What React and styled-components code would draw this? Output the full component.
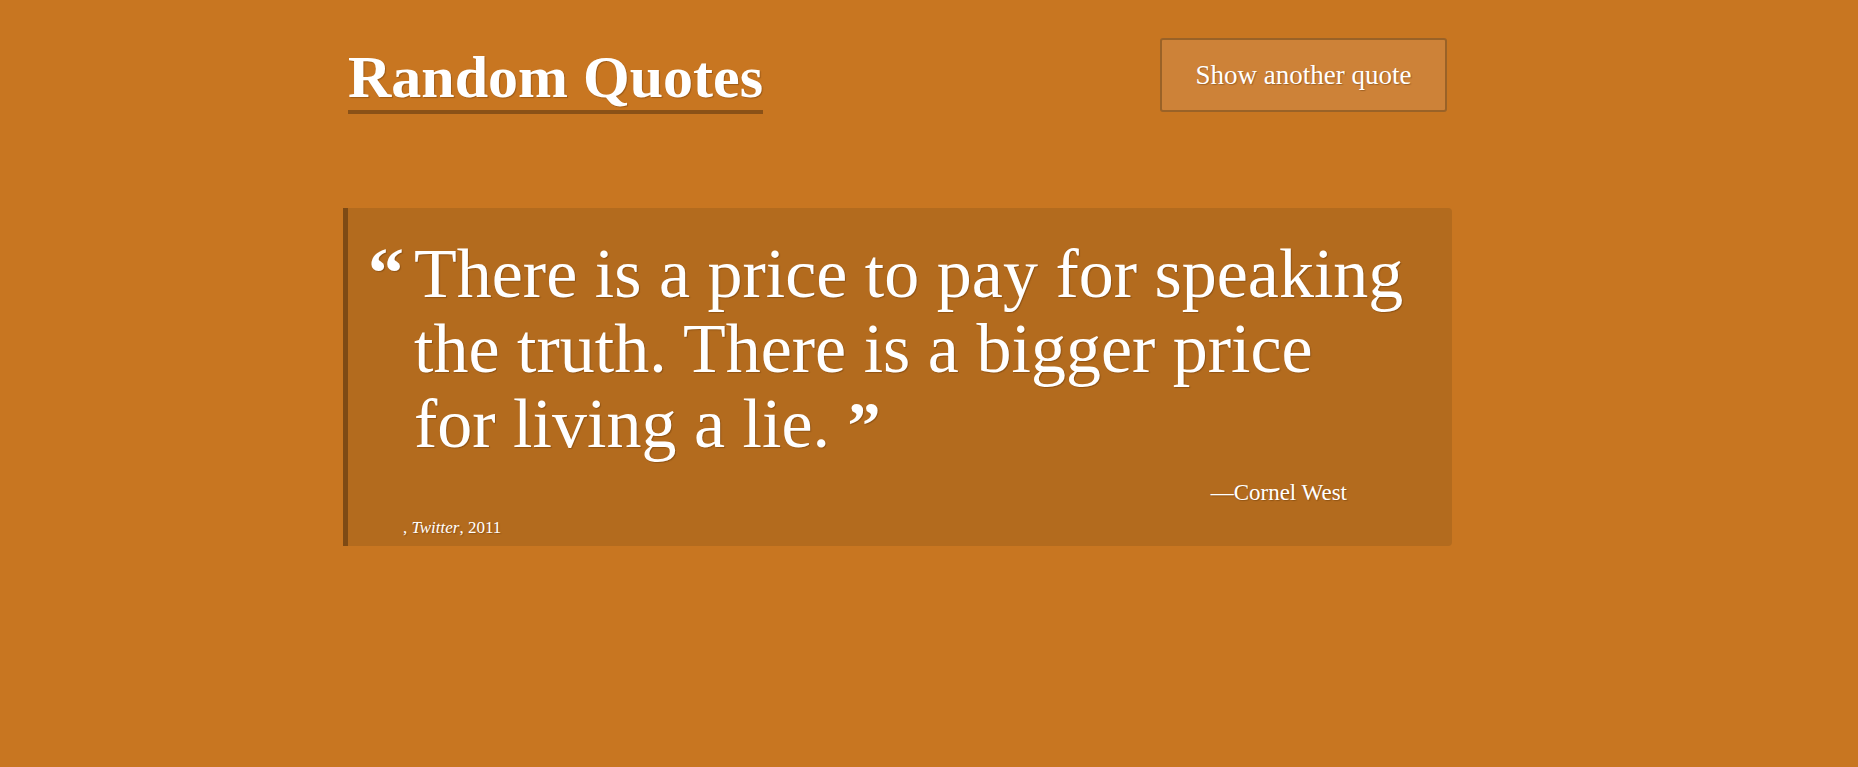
import { createGlobalStyle, styled } from "styled-components";

const GlobalStyle = createGlobalStyle`
  html, body {
    margin: 0;
    padding: 0;
    background: #c87621;
  }
  body {
    font-family: "Liberation Serif", "Times New Roman", serif;
    color: #ffffff;
    min-height: 767px;
  }
`;

const quote = {
  text: "There is a price to pay for speaking the truth. There is a bigger price for living a lie.",
  author: "Cornel West",
  source: "Twitter",
  year: "2011",
};

export default function App() {
  return (
    <>
      <GlobalStyle />
      <Container>
        <Header>
          <Title>Random Quotes</Title>
          <NextButton type="button">Show another quote</NextButton>
        </Header>
        <Card>
          <QuoteRow>
            <OpenMark>“</OpenMark>
            <QuoteText>
              {quote.text} <CloseMark>”</CloseMark>
            </QuoteText>
          </QuoteRow>
          <Cite>—{quote.author}</Cite>
          <Source>
            , <em>{quote.source}</em>, {quote.year}
          </Source>
        </Card>
      </Container>
    </>
  );
}

const Container = styled.main`
  width: 1109px;
  margin-left: calc(50% - 586px);
  padding-top: 38px;
  text-shadow: 1px 1px 1px rgba(80, 40, 0, 0.35);
`;

const Header = styled.header`
  display: flex;
  justify-content: space-between;
  align-items: flex-start;
  padding: 0 5px;
`;

const Title = styled.h1`
  margin: 6px 0 0;
  font-size: 60px;
  font-weight: 700;
  line-height: 66px;
  border-bottom: 4px solid #8a5117;
`;

const NextButton = styled.button`
  width: 287px;
  height: 74px;
  background: #cd8238;
  border: 2px solid #9a6227;
  border-radius: 3px;
  color: #ffffff;
  font-family: inherit;
  font-size: 27px;
  text-shadow: inherit;
  cursor: pointer;
`;

const Card = styled.section`
  margin-top: 94px;
  background: #b36b1e;
  border-left: 5px solid #7e4a14;
  border-radius: 0 4px 4px 0;
  padding: 28px 0 6px;
`;

const QuoteRow = styled.div`
  display: flex;
  align-items: baseline;
  padding-left: 20px;
`;

const OpenMark = styled.span`
  flex: 0 0 46px;
  font-size: 72px;
  font-weight: 700;
  line-height: 0;
`;

const QuoteText = styled.p`
  margin: 0;
  width: 14.2em;
  font-size: 70px;
  line-height: 75px;
`;

const CloseMark = styled.span`
  font-size: 66px;
  font-weight: 700;
`;

const Cite = styled.div`
  margin-top: 15px;
  padding-right: 105px;
  text-align: right;
  font-size: 23px;
  line-height: 1.4;
`;

const Source = styled.div`
  margin-top: 7px;
  padding-left: 55px;
  font-size: 17px;
  line-height: 24px;
`;
